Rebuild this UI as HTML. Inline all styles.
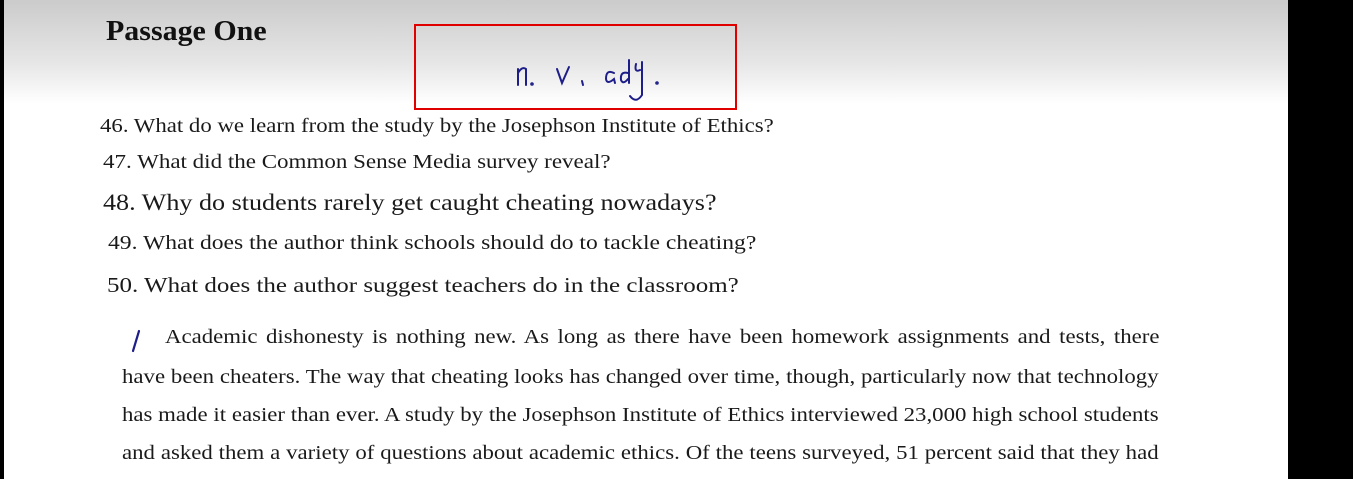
<!DOCTYPE html>
<html><head><meta charset="utf-8"><style>
body{margin:0;width:1353px;height:479px;overflow:hidden;background:#fff;position:relative;font-family:"Liberation Serif",serif;color:#1a1a1a}
.g{position:absolute;left:0;top:0;width:1288px;height:104px;background:linear-gradient(#cbcbcb,#e6e6e6 60%,#fff)}
.r{position:absolute;left:1288px;top:0;width:65px;height:479px;background:#000}
.l{position:absolute;left:0;top:0;width:4px;height:479px;background:#000}
.t{position:absolute;white-space:nowrap;transform-origin:0 0}
.j{position:absolute;left:122px;width:886px;font-size:19.5px;text-align:justify;text-align-last:justify;white-space:nowrap;transform:scaleX(1.17);transform-origin:0 0}
</style></head><body>
<div class="g"></div><div class="r"></div><div class="l"></div>
<div class="t" style="left:106px;top:16px;font-size:28px;font-weight:bold;color:#111;transform:scaleX(1.07)">Passage One</div>
<div style="position:absolute;left:414px;top:24px;width:319px;height:82px;border:2px solid #e00000"></div>
<svg style="position:absolute;left:510px;top:55px" width="160" height="50" viewBox="0 0 160 50" fill="none" stroke="#1e1e8a" stroke-width="2" stroke-linecap="round">
<path d="M8 14 L8 30 M8 18 Q12 11 16 14 L16 30"/><circle cx="22" cy="29" r="0.8"/>
<path d="M47 14 L52 28 L59 12"/><path d="M72 26 L73 30"/>
<path d="M104 18 Q96 14 96 24 Q97 30 104 24 L105 28"/>
<path d="M118 18 Q110 16 111 25 Q113 30 118 24 M119 5 L119 28"/>
<path d="M126 9 Q124 18 130 15 M132 7 L132 40 Q126 49 120 41"/><circle cx="147" cy="28" r="0.8"/>
</svg>
<div class="t" style="left:100px;top:116px;font-size:19.5px;transform:scaleX(1.17)">46. What do we learn from the study by the Josephson Institute of Ethics?</div>
<div class="t" style="left:103px;top:152px;font-size:19.5px;transform:scaleX(1.18)">47. What did the Common Sense Media survey reveal?</div>
<div class="t" style="left:103px;top:190px;font-size:23px;transform:scaleX(1.135)">48. Why do students rarely get caught cheating nowadays?</div>
<div class="t" style="left:108px;top:233px;font-size:19.5px;transform:scaleX(1.21)">49. What does the author think schools should do to tackle cheating?</div>
<div class="t" style="left:107px;top:273px;font-size:21px;transform:scaleX(1.19)">50. What does the author suggest teachers do in the classroom?</div>
<svg style="position:absolute;left:128px;top:328px" width="16" height="26"><path d="M11 3 L5 23" stroke="#1e1e8a" stroke-width="2.2" stroke-linecap="round"/></svg>
<div class="j" style="left:165px;width:850px;top:327px">Academic dishonesty is nothing new. As long as there have been homework assignments and tests, there</div>
<div class="j" style="top:367px">have been cheaters. The way that cheating looks has changed over time, though, particularly now that technology</div>
<div class="j" style="top:405px">has made it easier than ever. A study by the Josephson Institute of Ethics interviewed 23,000 high school students</div>
<div class="j" style="top:443px">and asked them a variety of questions about academic ethics. Of the teens surveyed, 51 percent said that they had</div>
</body></html>
